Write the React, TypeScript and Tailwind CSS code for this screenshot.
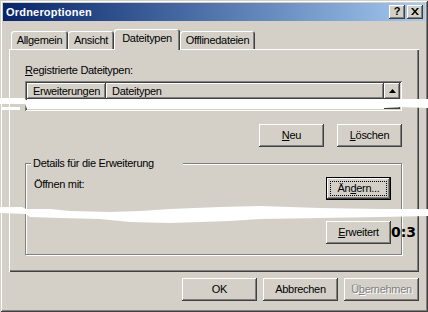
import React from "react";

const raised =
  "bg-[#D4D0C8] shadow-[inset_-1px_-1px_#404040,inset_1px_1px_#ffffff,inset_-2px_-2px_#808080,inset_2px_2px_#D4D0C8]";

type BtnProps = {
  children: React.ReactNode;
  w?: string;
  isDefault?: boolean;
  disabled?: boolean;
};

function Button({ children, w = "w-[65px]", isDefault, disabled }: BtnProps) {
  if (isDefault) {
    return (
      <div className={`${w} h-[23px] border border-black bg-[#D4D0C8]`}>
        <div className="h-full p-[3px] shadow-[inset_-1px_-1px_#404040,inset_1px_1px_#ffffff,inset_-2px_-2px_#808080]">
          <div className="h-full border border-dotted border-black flex items-center justify-center">
            {children}
          </div>
        </div>
      </div>
    );
  }
  return (
    <div
      className={`${w} h-[23px] ${raised} flex items-center justify-center ${
        disabled ? "text-[#808080] [text-shadow:1px_1px_0_#ffffff]" : ""
      }`}
    >
      {children}
    </div>
  );
}

function Tab({ label, w, active }: { label: string; w: string; active?: boolean }) {
  if (active) {
    return (
      <div
        className={`${w} relative z-10 -mb-px h-[21px] pb-[3px] flex items-center justify-center rounded-t-[3px] bg-[#D4D0C8] shadow-[inset_1px_1px_#ffffff,inset_-1px_0_#404040,inset_-2px_0_#808080]`}
      >
        {label}
      </div>
    );
  }
  return (
    <div
      className={`${w} h-[18px] flex items-center justify-center rounded-t-[3px] bg-[#D4D0C8] shadow-[inset_1px_1px_#ffffff,inset_-1px_0_#404040,inset_-2px_0_#808080]`}
    >
      {label}
    </div>
  );
}

export default function App() {
  return (
    <div className="relative w-[428px] h-[312px] overflow-hidden bg-[#D4D0C8] p-[3px] font-['Liberation_Sans',Arial,sans-serif] text-[11px] leading-[13px] tracking-[-0.3px] text-black shadow-[inset_1px_1px_#D4D0C8,inset_-1px_-1px_#404040,inset_2px_2px_#ffffff,inset_-2px_-2px_#808080]">
      {/* title bar */}
      <div className="h-[18px] flex items-center bg-linear-to-r from-[#0A246A] to-[#A6CAF0] pl-[3px] pr-[2px]">
        <span className="flex-1 font-bold text-white tracking-[0.2px]">Ordneroptionen</span>
        <div className="flex gap-[2px]">
          <div className={`w-[16px] h-[14px] ${raised} flex items-center justify-center font-bold text-[11px] leading-none tracking-normal pb-px`}>
            ?
          </div>
          <div className={`w-[16px] h-[14px] ${raised} flex items-center justify-center pb-px`}>
            <svg width="8" height="7" viewBox="0 0 8 7">
              <path d="M0 0h2l2 2.4L6 0h2L5 3.5 8 7H6L4 4.6 2 7H0l3-3.5z" fill="#000" />
            </svg>
          </div>
        </div>
      </div>

      <div className="px-[6px]">
        {/* tabs */}
        <div className="mt-[8px] h-[20px] flex items-end pl-[2px]">
          <Tab label="Allgemein" w="w-[57px]" />
          <Tab label="Ansicht" w="w-[46px]" />
          <Tab label="Dateitypen" w="w-[66px]" active />
          <Tab label="Offlinedateien" w="w-[75px]" />
        </div>

        {/* tab page */}
        <div className="relative h-[223px] bg-[#D4D0C8] pt-[15px] pl-[16px] pr-[17px] shadow-[inset_1px_1px_#ffffff,inset_-1px_-1px_#404040,inset_-2px_-2px_#808080]">
          <div>
            <span className="underline">R</span>egistrierte Dateitypen:
          </div>

          {/* list view */}
          <div className="mt-[4px] h-[30px] flex p-[2px] bg-white shadow-[inset_1px_1px_#808080,inset_-1px_-1px_#ffffff,inset_2px_2px_#404040,inset_-2px_-2px_#D4D0C8]">
            <div className="flex-1 flex h-[16px]">
              <div className={`w-[79px] ${raised} flex items-center pl-[6px]`}>Erweiterungen</div>
              <div className={`flex-1 ${raised} flex items-center pl-[6px]`}>Dateitypen</div>
            </div>
            <div className="w-[16px] flex flex-col bg-[#E8E6E1]">
              <div className={`h-[16px] ${raised} flex items-center justify-center`}>
                <svg width="7" height="4" viewBox="0 0 7 4">
                  <path d="M3.5 0L7 4H0z" fill="#000" />
                </svg>
              </div>
              <div className={`h-[10px] ${raised}`} />
            </div>
          </div>

          <div className="mt-[13px] flex justify-end gap-[13px]">
            <Button>
              <span className="underline">N</span>eu
            </Button>
            <Button>
              <span className="underline">L</span>öschen
            </Button>
          </div>

          {/* group box */}
          <div className="relative mt-[16px] h-[92px] border border-[#808080] shadow-[inset_1px_1px_#ffffff,1px_1px_#ffffff] pt-[13px] pl-[8px] pr-[10px]">
            <div className="absolute -top-[7px] left-[5px] w-[152px] bg-[#D4D0C8] pl-[2px]">
              Details für die Erweiterung
            </div>
            <div className="flex items-start justify-between">
              <div className="mt-[1px]">Öffnen mit:</div>
              <Button isDefault>
                Än<span className="underline">d</span>ern...
              </Button>
            </div>
            <div className="mt-[21px] flex justify-end">
              <Button>
                <span className="underline">E</span>rweitert
              </Button>
            </div>
          </div>
        </div>

        {/* dialog buttons */}
        <div className="mt-[6px] flex justify-end gap-[6px]">
          <Button w="w-[75px]">OK</Button>
          <Button w="w-[75px]">Abbrechen</Button>
          <Button w="w-[75px]" disabled>
            Ü<span className="underline">b</span>ernehmen
          </Button>
        </div>
      </div>

      {/* frame counter */}
      <div className="absolute left-[391px] top-[225px] font-['DejaVu_Sans',sans-serif] font-bold text-[14px] leading-none tracking-normal">
        0:3
      </div>

      {/* torn strips */}
      <svg className="absolute left-0 top-0 pointer-events-none" width="428" height="312" viewBox="0 0 428 312">
        <polygon
          fill="#ffffff"
          points="0,98 24,98 26,100 70,100 160,99 300,99 428,99 428,108 400,107 384,108 300,108 160,109 60,109 27,109 25,104 0,104"
        />
        <polygon fill="#ffffff" points="2,107 20,107 20,110 2,110" />
        <polygon
          fill="#ffffff"
          points="0,207 22,207 26,209 50,209 70,211 110,212 140,211 170,209 220,207 260,206 320,208 380,209 428,209 428,216 380,217 320,218 260,219 230,221 200,222 170,223 130,222 100,219 60,218 30,217 26,214 0,213"
        />
      </svg>
    </div>
  );
}
